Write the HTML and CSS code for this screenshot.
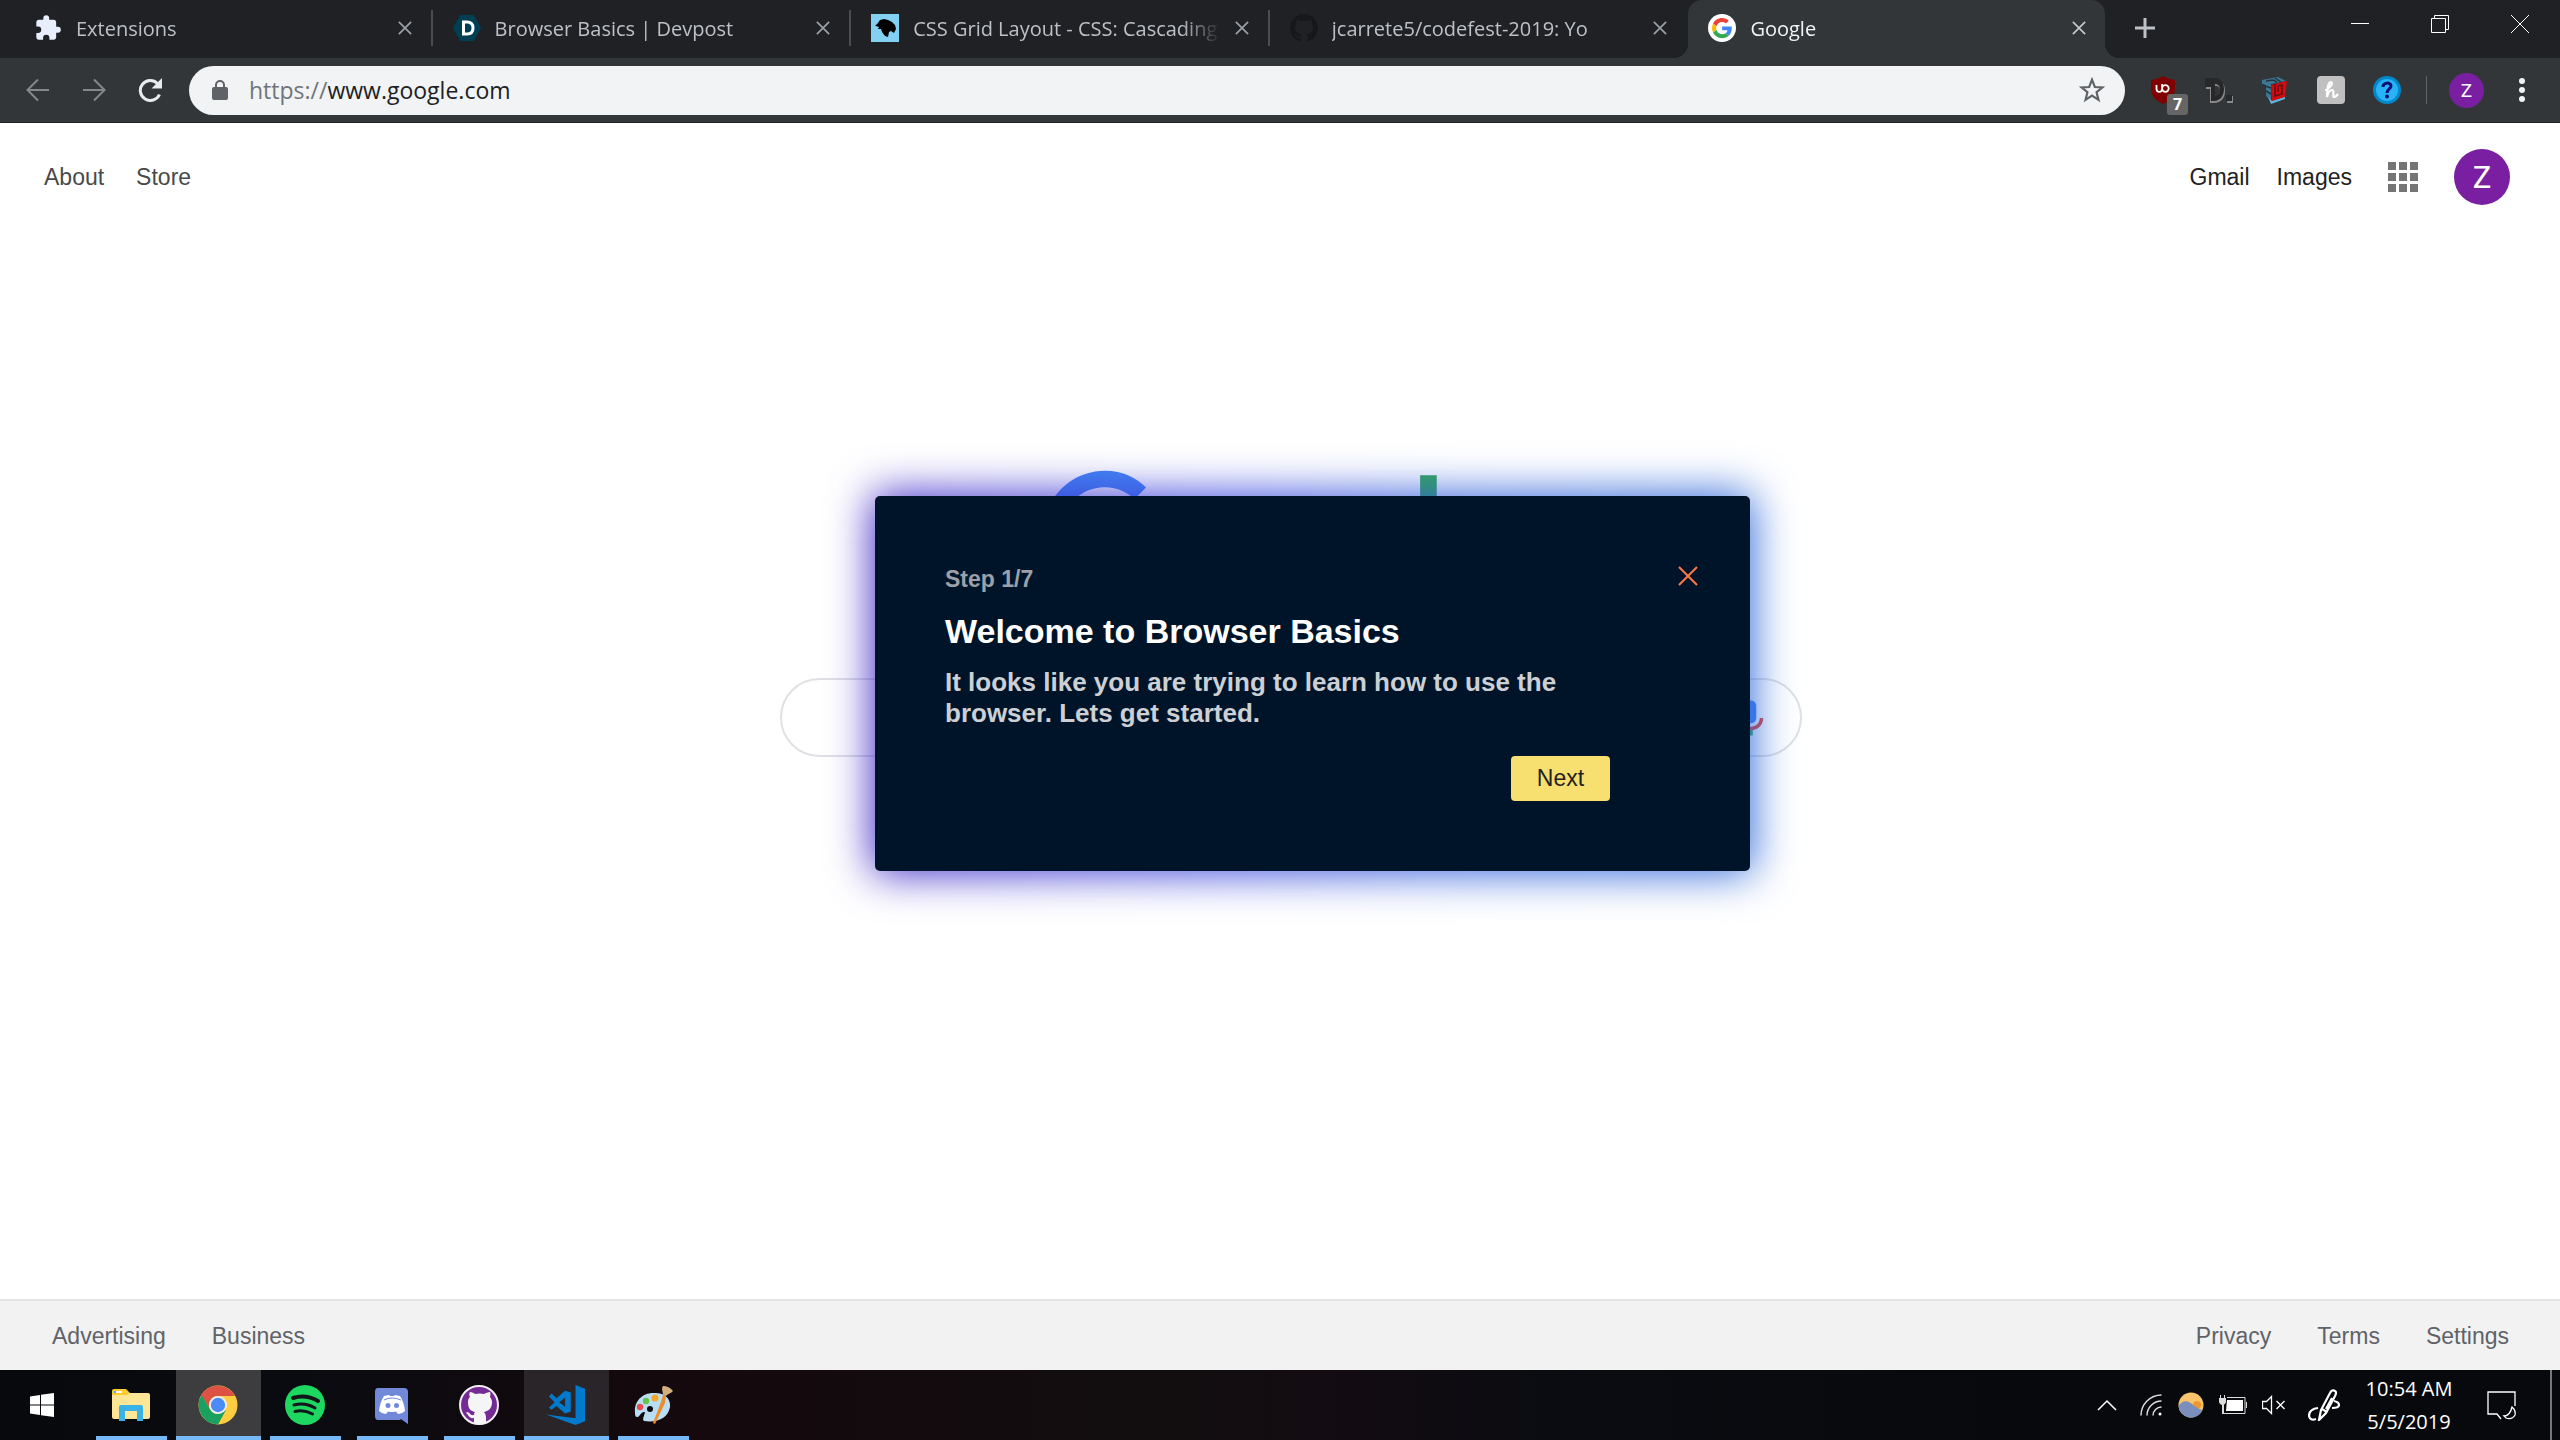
FILE: index.html
```html
<!DOCTYPE html>
<html lang="en">
<head>
  <meta charset="UTF-8" />
  <meta name="viewport" content="width=device-width, initial-scale=1.0" />
  <title>Google</title>
  <link rel="stylesheet" href="styles.css">
</head>
<body>
  <svg width="0" height="0" class="defs">
    <defs>
      <symbol id="x" viewBox="0 0 16 16"><path d="M1 1l14 14M15 1L1 15" fill="none" stroke="currentColor" stroke-width="2"/></symbol>
      <symbol id="octocat" viewBox="0 0 16 16"><path fill="currentColor" d="M8 0C3.58 0 0 3.58 0 8c0 3.54 2.29 6.53 5.47 7.59.4.07.55-.17.55-.38 0-.19-.01-.82-.01-1.49-2.01.37-2.53-.49-2.69-.94-.09-.23-.48-.94-.82-1.13-.28-.15-.68-.52-.01-.53.63-.01 1.08.58 1.23.82.72 1.21 1.87.87 2.33.66.07-.52.28-.87.51-1.07-1.78-.2-3.64-.89-3.64-3.95 0-.87.31-1.59.82-2.15-.08-.2-.36-1.02.08-2.12 0 0 .67-.21 2.2.82.64-.18 1.32-.27 2-.27s1.36.09 2 .27c1.53-1.04 2.2-.82 2.2-.82.44 1.1.16 1.92.08 2.12.51.56.82 1.27.82 2.15 0 3.07-1.87 3.75-3.65 3.95.29.25.54.73.54 1.48 0 1.07-.01 1.93-.01 2.2 0 .21.15.46.55.38A8.01 8.01 0 0 0 16 8c0-4.42-3.58-8-8-8z"/></symbol>
    </defs>
  </svg>

  <header class="browser">
    <div class="tab-strip">
      <div class="tabs">
        <div class="tab">
          <svg class="favicon" viewBox="0 0 24 24"><path fill="#e8eefb" d="M20.500 11H19V7c0-1.100-.9-2-2-2h-4V3.500a2.500 2.500 0 0 0-5 0V5H4c-1.100 0-2 .9-2 2v3.800h1.500a2.700 2.700 0 0 1 0 5.400H2V20c0 1.100.9 2 2 2h3.800v-1.500a2.700 2.700 0 0 1 5.400 0V22H17c1.100 0 2-.9 2-2v-4h1.500a2.500 2.500 0 0 0 0-5z"/></svg>
          <span class="tab-title">Extensions</span>
          <button class="tab-close" aria-label="Close tab"><svg><use href="#x"/></svg></button>
        </div>
        <div class="tab">
          <svg class="favicon" viewBox="0 0 28 28"><path d="M7 1h14l7 13-7 13H7L0 14z" fill="#003e54"/><path d="M10.500 8h3.500c4 0 6 2.500 6 6s-2 6-6 6h-3.500z" fill="none" stroke="#fff" stroke-width="3"/></svg>
          <span class="tab-title">Browser Basics | Devpost</span>
          <button class="tab-close" aria-label="Close tab"><svg><use href="#x"/></svg></button>
        </div>
        <div class="tab">
          <svg class="favicon" viewBox="0 0 28 28"><path fill="#83d0f2" d="M0 0h28v28H0z"/><path d="M4 12l3-3 2-3 4-1 4 1 4 2 3 3 1 4-2 4-3-2-2 1-1 5-3-1-3-4-1-3-3 0 1-2-3-1z"/></svg>
          <span class="tab-title">CSS Grid Layout - CSS: Cascading</span>
          <button class="tab-close" aria-label="Close tab"><svg><use href="#x"/></svg></button>
        </div>
        <div class="tab">
          <svg class="favicon github"><use href="#octocat"/></svg>
          <span class="tab-title">jcarrete5/codefest-2019: Yo</span>
          <button class="tab-close" aria-label="Close tab"><svg><use href="#x"/></svg></button>
        </div>
        <div class="tab active">
          <svg class="favicon" viewBox="0 0 28 28"><circle cx="14" cy="14" r="14" fill="#fff"/><g transform="translate(4 4) scale(.42)"><path fill="#EA4335" d="M24 9.500c3.540 0 6.710 1.220 9.210 3.600l6.850-6.850C35.900 2.380 30.470 0 24 0 14.620 0 6.510 5.380 2.560 13.220l7.980 6.190C12.430 13.720 17.740 9.500 24 9.500z"/><path fill="#4285F4" d="M46.980 24.550c0-1.570-.15-3.090-.38-4.550H24v9.020h12.940c-.58 2.960-2.260 5.480-4.780 7.180l7.730 6c4.510-4.180 7.090-10.360 7.090-17.650z"/><path fill="#FBBC05" d="M10.530 28.590c-.48-1.450-.76-2.990-.76-4.590s.27-3.140.76-4.590l-7.980-6.190C.92 16.460 0 20.120 0 24s.92 7.540 2.560 10.780l7.970-6.190z"/><path fill="#34A853" d="M24 48c6.480 0 11.930-2.130 15.890-5.810l-7.730-6c-2.150 1.450-4.920 2.300-8.160 2.300-6.260 0-11.570-4.220-13.470-9.910l-7.980 6.190C6.510 42.620 14.620 48 24 48z"/></g></svg>
          <span class="tab-title">Google</span>
          <button class="tab-close" aria-label="Close tab"><svg><use href="#x"/></svg></button>
        </div>
      </div>
      <button class="new-tab" aria-label="New tab"><svg viewBox="0 0 20 20"><path d="M10 0v20M0 10h20" stroke="#bdc1c6" stroke-width="3"/></svg></button>
      <div class="window-controls">
        <button aria-label="Minimize"><svg viewBox="0 0 18 18"><path d="M0 8.500h18" stroke="#fff"/></svg></button>
        <button aria-label="Restore"><svg viewBox="0 0 18 18" fill="none" stroke="#fff"><path d="M.5 3.500h14v14H.5zM3.500 3.500v-3h14v14h-3"/></svg></button>
        <button aria-label="Close"><svg viewBox="0 0 18 18"><path d="M0 0l18 18M18 0L0 18" stroke="#fff"/></svg></button>
      </div>
    </div>

    <div class="toolbar">
      <div class="nav-buttons">
        <button aria-label="Back"><svg class="off" viewBox="0 0 24 24"><path d="M23 12H2M12 1.500L1.500 12 12 22.500"/></svg></button>
        <button aria-label="Forward"><svg class="off" viewBox="0 0 24 24"><path d="M1 12h21M12 1.500L22.500 12 12 22.500"/></svg></button>
        <button aria-label="Reload"><svg viewBox="0 0 24 24"><path d="M21.500 16.500A10 10 0 1 1 19.500 5.500" stroke-width="3"/><path d="M24 0v10.500H13.500z" fill="#e8eaed" stroke="none"/></svg></button>
      </div>
      <div class="omnibox">
        <svg class="lock" viewBox="0 0 16 20"><path d="M4 8V5a4 4 0 0 1 8 0v3" fill="none" stroke="#5f6368" stroke-width="2"/><rect y="7" width="16" height="13" rx="2" fill="#5f6368"/></svg>
        <a class="url" href="#"><span>https://</span>www.google.com</a>
        <button aria-label="Bookmark this page"><svg class="star" viewBox="0 0 24 24"><path d="M12 2.500l2.600 6.700 7.100.4-5.500 4.500 1.800 7-6-3.900-6 3.900 1.800-7-5.500-4.500 7.100-.4z" fill="none" stroke="#5f6368" stroke-width="2"/></svg></button>
      </div>
      <div class="extensions">
        <button class="ublock" aria-label="uBlock Origin">
          <svg viewBox="0 0 28 28"><path d="M14 0c4 2.500 8 3.500 12 4v8c0 8-5 13-12 16C7 25 2 20 2 12V4c4-.5 8-1.500 12-4z" fill="#800000"/><path d="M7.500 9v4q0 2.800 2.800 2.800t2.800-2.800V8m0 4.500a3.300 3.300 0 1 0 6.600 0 3.300 3.300 0 1 0-6.600 0" fill="none" stroke="#fff" stroke-width="1.800"/></svg>
          <span class="badge">7</span>
        </button>
        <button aria-label="D"><svg viewBox="0 0 28 28"><path fill="#8a8a8a" fill-rule="evenodd" d="M1 4h9c7 0 10 4 10 11s-4 12-11 12H5V13H1zM10 10v12c4 0 5-3 5-7s-1-5-5-5zM22 20h6v7h-6z"/><path fill="#26282a" fill-rule="evenodd" d="M0 2h9c7 0 10 4 10 11s-4 12-10 12H6V11H0zM10 8v12c3 0 5-2 5-6s-2-6-5-6zM21 19h6v6h-6z"/></svg></button>
        <button aria-label="L"><svg viewBox="0 0 28 28"><path d="M1 4L17 1l8 4-15 3v17l-5-5V9L1 8z" fill="#3c7796"/><path d="M5 5l7-1 4 2M1 9l9 3M5 15l5 3M14 2l6 4" stroke="#26343c" stroke-width="1.500" fill="none"/><path d="M10 9l16-4-2 16-13 4z" fill="#d40b0b"/><path d="M14 8v12l7-2V9l-4 1v6" fill="none" stroke="#5b1118" stroke-width="1.500"/><path d="M7 21l4 4 13-4v2l-14 5z" fill="#61b3e4"/></svg></button>
        <button aria-label="Honey"><svg viewBox="0 0 28 28"><rect width="28" height="28" rx="4" fill="#c0c0c0"/><path d="M8 14c4-1 9-7 6-8-3 0-4 9-4 15 1-4 3-7 5-7 3 0 0 7 2 7s2-1 4-3" fill="none" stroke="#fff" stroke-width="2.200"/></svg></button>
        <button aria-label="Help"><svg viewBox="0 0 28 28"><circle cx="14" cy="14" r="12.500" fill="#27b3f5" stroke="#0387cb" stroke-width="3"/><path d="M10 11c0-5 8-5 8-1 0 3-4 3-4 7" fill="none" stroke="#0a1172" stroke-width="3"/><circle cx="14" cy="20.500" r="2" fill="#0a1172"/></svg></button>
      </div>
      <span class="divider"></span>
      <button class="profile" aria-label="Profile">Z</button>
      <button class="menu" aria-label="Menu"><svg viewBox="0 0 6 24" fill="#f1f3f4"><circle cx="3" cy="3" r="3"/><circle cx="3" cy="12" r="3"/><circle cx="3" cy="21" r="3"/></svg></button>
    </div>
  </header>

  <main class="page">
    <nav class="top-nav">
      <div class="links">
        <a href="#">About</a>
        <a href="#">Store</a>
      </div>
      <div class="links account">
        <a class="dark" href="#">Gmail</a>
        <a class="dark" href="#">Images</a>
        <button class="apps" aria-label="Google apps"><svg viewBox="0 0 30 30" fill="#757575"><path d="M0 0h8v8H0zM11 0h8v8h-8zM22 0h8v8h-8zM0 11h8v8H0zM11 11h8v8h-8zM22 11h8v8h-8zM0 22h8v8H0zM11 22h8v8h-8zM22 22h8v8h-8z"/></svg></button>
        <button class="avatar" aria-label="Account">Z</button>
      </div>
    </nav>

    <div class="search">
      <svg class="logo" viewBox="0 0 272 92">
        <path fill="#EA4335" d="M115.750 47.180c0 12.770-9.990 22.180-22.250 22.180s-22.250-9.410-22.250-22.180C71.250 34.320 81.240 25 93.500 25s22.250 9.320 22.250 22.180zm-9.740 0c0-7.980-5.790-13.440-12.510-13.440S80.990 39.200 80.990 47.180c0 7.900 5.790 13.440 12.510 13.440s12.510-5.550 12.510-13.440z"/>
        <path fill="#FBBC05" d="M163.750 47.180c0 12.770-9.990 22.180-22.250 22.180s-22.250-9.410-22.250-22.180c0-12.850 9.990-22.180 22.250-22.180s22.250 9.320 22.250 22.180zm-9.740 0c0-7.980-5.790-13.440-12.510-13.440s-12.510 5.460-12.510 13.440c0 7.900 5.790 13.440 12.510 13.440s12.510-5.550 12.510-13.440z"/>
        <path fill="#4285F4" d="M209.750 26.340v39.820c0 16.380-9.660 23.070-21.080 23.070-10.750 0-17.220-7.190-19.660-13.070l8.480-3.530c1.510 3.610 5.210 7.870 11.170 7.870 7.310 0 11.840-4.510 11.840-13v-3.190h-.34c-2.180 2.690-6.380 5.040-11.680 5.040-11.090 0-21.250-9.660-21.250-22.090 0-12.520 10.160-22.260 21.250-22.260 5.290 0 9.490 2.350 11.680 4.960h.34v-3.610h9.250z"/>
        <path fill="#34A853" d="M225 3v65h-9.500V3h9.500z"/>
        <path fill="#EA4335" d="M262.020 54.480l7.560 5.040c-2.440 3.610-8.320 9.830-18.480 9.830-12.600 0-22.010-9.740-22.010-22.180 0-13.190 9.490-22.180 20.920-22.180 11.510 0 17.140 9.160 18.980 14.110l1.010 2.520-29.650 12.280c2.270 4.450 5.800 6.720 10.750 6.720 4.960 0 8.400-2.440 10.920-6.140z"/>
        <path fill="#4285F4" d="M35.290 41.410V32H67c.31 1.640.47 3.580.47 5.680 0 7.060-1.930 15.790-8.150 22.010-6.050 6.300-13.780 9.660-24.020 9.660C16.320 69.350.36 53.890.36 34.910.36 15.930 16.320.47 35.300.47c10.500 0 17.980 4.120 23.600 9.490l-6.640 6.640c-4.030-3.780-9.490-6.720-16.970-6.720-13.860 0-24.700 11.170-24.700 25.030 0 13.860 10.840 25.030 24.700 25.030 8.990 0 14.110-3.610 17.390-6.890 2.660-2.660 4.410-6.460 5.100-11.650l-22.490.01z"/>
      </svg>
      <form class="search-box">
        <input type="text" aria-label="Search">
        <button type="button" aria-label="Search by voice">
          <svg viewBox="0 0 24 24"><path fill="#4285f4" d="M12 15c1.660 0 3-1.310 3-2.970V5.010C15 3.350 13.660 2 12 2S9 3.340 9 5.010v7.020C9 13.690 10.340 15 12 15z"/><path fill="#34a853" d="M11 18.080h2v3.920h-2z"/><path fill="#fbbc05" d="M7.050 16.870C5.780 15.590 5 13.920 5 12h2c0 1.450.56 2.420 1.470 3.380v.32l-1.150 1.180z"/><path fill="#ea4335" d="M12 16.930c-1.390 0-2.640-.55-3.530-1.550l-1.410 1.490C8.320 18.160 10.070 19 12 19c3.870 0 6.990-2.920 6.990-7H17c0 2.920-2.240 4.930-5 4.930z"/></svg>
        </button>
      </form>
    </div>

    <div class="overlay">
      <div class="modal">
        <div class="modal-content">
          <div class="modal-top">
            <h3>Step 1/7</h3>
            <button class="close-btn" aria-label="Close"><svg viewBox="0 0 20 20"><path d="M1 1l18 18M19 1L1 19" stroke="#ff7a45" stroke-width="2"/></svg></button>
          </div>
          <h1>Welcome to Browser Basics</h1>
          <p>It looks like you are trying to learn how to use the browser. Lets get started.</p>
          <button class="next-btn">Next</button>
        </div>
      </div>
    </div>
  </main>

  <footer class="page-footer">
    <div class="links">
      <a href="#">Advertising</a>
      <a href="#">Business</a>
    </div>
    <div class="links">
      <a href="#">Privacy</a>
      <a href="#">Terms</a>
      <a href="#">Settings</a>
    </div>
  </footer>

  <div class="taskbar">
    <div class="apps-list">
      <button class="start" aria-label="Start"><svg viewBox="0 0 24 24" fill="#fff"><path d="M0 3.500l10-1.500v9.500H0zM11 1.800L24 0v11.500H11zM0 12.500h10V22L0 20.500zM11 12.500h13V24l-13-1.800z"/></svg></button>
      <button class="app" aria-label="File Explorer"><svg viewBox="0 0 40 40"><rect x="1" y="8" width="38" height="26" rx="2" fill="#ffe694"/><path d="M1 10V6q0-2 2-2h12l4 4-3 2z" fill="#fccb30"/><path d="M3 6h8v2H3z" fill="#fff"/><path d="M3 6h2v2H3z" fill="#38b3e8"/><path d="M8 36V22q0-2 2-2h20q2 0 2 2v14h-6V26H14v10z" fill="#38b3e8"/></svg></button>
      <button class="app current" aria-label="Chrome"><svg viewBox="0 0 40 40"><circle cx="20" cy="20" r="19.500" fill="#ffcd40"/><path d="M3.100 10.300A19.500 19.500 0 0 1 37 11H20a9 9 0 0 0-7.800 13.500z" fill="#de5246"/><path d="M3.500 10A19.500 19.500 0 0 0 20 39.500l8-14.500-8 4a9 9 0 0 1-7.800-4.500z" fill="#1aa15f"/><circle cx="20" cy="20" r="9" fill="#f1f1f1"/><circle cx="20" cy="20" r="7.200" fill="#4c8bf5"/></svg></button>
      <button class="app" aria-label="Spotify"><svg viewBox="0 0 40 40"><circle cx="20" cy="20" r="20" fill="#1ed760"/><g fill="none" stroke="#11151a" stroke-linecap="round"><path d="M8 13q13-4 25 3" stroke-width="4"/><path d="M9 20q11-3 21 3" stroke-width="3"/><path d="M10 26.500q9-2.500 17.500 2.500" stroke-width="3"/></g></svg></button>
      <button class="app" aria-label="Discord"><svg viewBox="0 0 40 40"><path d="M6 3h26q4 0 4 4v32l-8-4H6q-3 0-3-4V7q0-4 3-4z" fill="#7289da"/><path d="M3 35h25l2-2 6 6H3z" fill="#0c0a0e"/><path d="M26 32l10 7v-8z" fill="#7289da"/><path d="M12 11l5-1 1 1h4l1-1 5 1q4 6 5 15-3 3-7 3l-2-2.500q-4 1-8 0L14 29q-4 0-7-3 1-9 5-15z" fill="#fff"/><circle cx="16" cy="20.500" r="2.500" fill="#7289da"/><circle cx="24.500" cy="20.500" r="2.500" fill="#7289da"/><path d="M12 15q8-4 17 0" fill="none" stroke="#7289da"/></svg></button>
      <button class="app" aria-label="GitHub Desktop"><svg viewBox="0 0 40 40"><circle cx="20" cy="20" r="19" fill="#742b95" stroke="#f4eef7" stroke-width="2"/><path d="M9 17c0-3 1-4 2-5-1-2-1-4 0-5 2 0 4 1 5 2q5-1 9 0c2-1 4-2 6-2 1 2 0 4 0 5 1 1 2 3 2 5 0 6-3 9-8 10q2 2 2 5v6q-6 3-12 0v-5c-5 1-5-3-8-5l1-1c3 0 3 4 7 3q0-2 1-3c-5-1-7-4-7-10z" fill="#f5f5f5"/></svg></button>
      <button class="app current soft" aria-label="Visual Studio Code"><svg viewBox="0 0 42 42" fill="#007acc"><path d="M31 0l10 4v34l-10 4L0 31l31 4z"/><path fill-rule="evenodd" d="M20 6l6 2v20l-6 2-9-8-5 4-3-2 6-6-6-6 3-3 5 5zm0 7l-6 5 6 5z"/></svg></button>
      <button class="app" aria-label="Paint"><svg viewBox="0 0 40 40"><path d="M2 27C1 16 10 7 22 8c10 0 16 6 15 14-2 11-12 16-26 14-2-2 0-4 1-9-4-1-5 5-8 5-2 0-2-3-2-5z" fill="#b9def3"/><circle cx="17" cy="24" r="3" fill="#0e0a10"/><circle cx="7" cy="22" r="3.200" fill="#e84c4c"/><circle cx="13" cy="16" r="3.200" fill="#65c34a"/><circle cx="22" cy="13" r="3.500" fill="#f6a623"/><path d="M30 10c0-4-2-6 0-9q6 0 10 5c-3 3-4 2-7 5z" fill="#d4ad7d"/><path d="M30 10l3 1-1 7-10 21-2-1 8-21z" fill="#ee8d27"/></svg></button>
    </div>
    <div class="tray">
      <svg class="chevron" viewBox="0 0 20 12"><path d="M1 11l9-9 9 9" fill="none" stroke="#fff" stroke-width="1.500"/></svg>
      <svg class="wifi" viewBox="0 0 22 22" fill="none" stroke="#ddd"><path d="M1 21.500A20.500 20.500 0 0 1 21.500 1M7 21.500A14.500 14.500 0 0 1 21.500 7M13 21.500a8.500 8.500 0 0 1 8.500-8.500" stroke-width="1.500"/><circle cx="20" cy="20" r="1.500" fill="#fff" stroke="none"/></svg>
      <svg class="weather" viewBox="0 0 26 26"><circle cx="13" cy="13" r="12.500" fill="#f7c46c"/><circle cx="19" cy="13" r="4" fill="#f0982f"/><path d="M.5 14c3-5 8-6 12-3s8 6 12 7A12.500 12.500 0 0 1 .5 14z" fill="#7b8fbd"/></svg>
      <svg class="battery" viewBox="0 0 28 20"><path d="M8 2.500h18v16H5" fill="none" stroke="#ddd"/><path d="M8 5h16v11H7z" fill="#fff"/><path d="M27 7h1v6h-1zM0 3h7v4q-1 3-3.500 3T0 7zM1 0h1v3H1zM5 0h1v3H5zM3 9h2v10H3z" fill="#ddd"/></svg>
      <svg class="speaker" viewBox="0 0 24 20" fill="none" stroke="#fff"><path d="M.5 6.500h4l5-5v17l-5-5h-4zM14.500 6l8 8M22.500 6l-8 8" stroke-width="1.300"/></svg>
      <svg class="pen" viewBox="0 0 32 32" fill="none" stroke="#fff" stroke-width="2.200"><path d="M11 31l2-10L22 4q2-4 5-2 2 1 0 5L18 24zM14 20l5 3M24 9l-6 11"/><path d="M10 19q-9 1-9 8 1 5 7 3M26 12q5 1 5 4 0 3-7 3"/></svg>
      <div class="clock"><span>10:54 AM</span><span>5/5/2019</span></div>
      <svg class="action" viewBox="0 0 29 29" fill="none" stroke="#fff" stroke-width="1.300"><path d="M14 28l-4-5H1V1h27v14"/><path d="M25 16q4 3 3 8-3 5-9 3l-2-2q6 0 8-9z"/></svg>
      <span class="show-desktop"></span>
    </div>
  </div>
</body>
</html>
```

FILE: styles.css
```css
* {
  box-sizing: border-box;
}
body {
  margin: 0;
  font-family: "Liberation Sans", Arial, sans-serif;
  font-size: 23px;
  display: flex;
  flex-direction: column;
  min-height: 100vh;
  background-color: #fff;
}
button {
  border: 0;
  padding: 0;
  background: none;
  font: inherit;
  color: inherit;
  cursor: pointer;
}
svg {
  display: block;
}
a {
  color: inherit;
  text-decoration: none;
}
.defs {
  position: absolute;
}

/* browser */
.browser {
  font-family: "Open Sans", "Noto Sans", sans-serif;
  background-color: #323639;
  border-bottom: 1px solid #202124;
}
.tab-strip {
  display: flex;
  align-items: flex-start;
  height: 58px;
  background-color: #202124;
}
.tabs {
  display: flex;
  align-items: flex-start;
  flex: 0 1 2105px;
  min-width: 0;
  padding-left: 14px;
}
.tab {
  flex: 1;
  min-width: 0;
  display: flex;
  align-items: center;
  gap: 14px;
  height: 36px;
  margin-top: 10px;
  padding: 0 19px 0 20px;
  border-right: 2px solid #4a4c50;
  color: #bdc1c6;
  font-size: 20px;
}
.tab:nth-child(4) {
  border-color: transparent;
}
.tab.active {
  position: relative;
  height: 58px;
  margin-top: 0;
  padding-bottom: 2px;
  border: 0;
  border-radius: 14px 14px 0 0;
  background-color: #323639;
  color: #f1f3f4;
}
/* curved feet of the active tab */
.tab.active::before, .tab.active::after {
  content: "";
  position: absolute;
  bottom: 0;
  width: 14px;
  height: 14px;
}
.tab.active::before {
  right: 100%;
  background: radial-gradient(circle at 0 0, transparent 14px, #323639 14px);
}
.tab.active::after {
  left: 100%;
  background: radial-gradient(circle at 100% 0, transparent 14px, #323639 14px);
}
.favicon {
  flex: none;
  width: 28px;
  height: 28px;
}
.favicon.github {
  color: #15171a;
}
.tab-title {
  flex: 1;
  overflow: hidden;
  white-space: nowrap;
  -webkit-mask-image: linear-gradient(to left, transparent, #000 40px);
  mask-image: linear-gradient(to left, transparent, #000 40px);
}
.tab-close {
  color: #9aa0a6;
}
.tab-close svg {
  width: 14px;
  height: 14px;
}
.active .tab-close {
  color: #c4c7ca;
}
.new-tab {
  margin: 18px 0 0 30px;
}
.new-tab svg {
  width: 20px;
  height: 20px;
}
.window-controls {
  display: flex;
  margin-left: auto;
  height: 48px;
}
.window-controls button {
  width: 80px;
  display: flex;
  align-items: center;
  justify-content: center;
}
.window-controls svg {
  width: 18px;
  height: 18px;
}
.toolbar {
  display: flex;
  align-items: center;
  height: 64px;
  padding: 0 35px 0 26px;
}
.nav-buttons {
  display: flex;
  gap: 32px;
}
.nav-buttons svg {
  width: 24px;
  height: 24px;
  fill: none;
  stroke: #e8eaed;
  stroke-width: 2;
}
.nav-buttons .off {
  stroke: #85888b;
}
.omnibox {
  flex: 1;
  display: flex;
  align-items: center;
  height: 49px;
  margin-left: 27px;
  padding: 0 20px 0 23px;
  border-radius: 25px;
  background-color: #f1f3f4;
}
.lock {
  width: 16px;
  height: 20px;
}
.url {
  flex: 1;
  margin-left: 21px;
  color: #202124;
  font-size: 23px;
}
.url span {
  color: #70757a;
}
.star {
  width: 26px;
  height: 26px;
}
.extensions {
  display: flex;
  gap: 28px;
  margin-left: 24px;
}
.extensions svg {
  width: 28px;
  height: 28px;
}
.ublock {
  position: relative;
}
.badge {
  position: absolute;
  right: -11px;
  bottom: -11px;
  width: 21px;
  height: 21px;
  border-radius: 3px;
  background-color: #666;
  color: #fff;
  font-size: 16px;
  font-weight: bold;
  line-height: 21px;
  text-align: center;
}
.divider {
  width: 1px;
  height: 28px;
  margin: 0 22px 0 25px;
  background-color: #5f6368;
}
.profile {
  width: 35px;
  height: 35px;
  border-radius: 50%;
  background-color: #7b1fa2;
  color: #fff;
  font-family: Roboto, sans-serif;
  font-size: 19px;
}
.menu {
  margin-left: 35px;
}
.menu svg {
  width: 6px;
  height: 24px;
}

/* page */
.page {
  flex: 1;
  position: relative;
}
.links {
  display: flex;
  align-items: center;
}
.top-nav {
  display: flex;
  justify-content: space-between;
  padding: 26px 50px 0 44px;
  color: #4a4a4a;
}
.top-nav .links {
  gap: 32px;
}
.top-nav .account {
  gap: 27px;
}
.dark {
  color: #222;
}
.apps {
  margin: 0 9px;
}
.apps svg {
  width: 30px;
  height: 30px;
}
.avatar {
  width: 56px;
  height: 56px;
  border-radius: 50%;
  background-color: #7b1fa2;
  color: #fff;
  font-family: Roboto, sans-serif;
  font-size: 31px;
}
.search {
  display: flex;
  flex-direction: column;
  align-items: center;
  gap: 47px;
  padding-top: 265px;
}
.logo {
  width: 476px;
  height: 161px;
  margin-left: 2px;
}
.search-box {
  display: flex;
  align-items: center;
  width: 1022px;
  height: 79px;
  margin-left: 22px;
  padding: 0 28px;
  border: 2px solid #dfe1e5;
  border-radius: 40px;
}
.search-box input {
  flex: 1;
  border: 0;
  outline: 0;
  background: none;
  font-size: 28px;
}
.search-box svg {
  width: 42px;
  height: 42px;
}
.overlay {
  position: absolute;
  inset: 0;
  display: flex;
  justify-content: center;
  align-items: flex-start;
  padding: 373px 0 0 65px;
}
.modal {
  position: relative;
  width: 875px;
}
/* coloured glow behind the card */
.modal::before {
  content: "";
  position: absolute;
  inset: -2px;
  background: linear-gradient(to right, #3c24c4, #3a46dc 40%, #2f62dc 70%, #2a66d8);
  filter: blur(22px);
}
.modal-content {
  position: relative;
  padding: 70px;
  border-radius: 5px;
  background-color: #001429;
  color: #fff;
}
.modal-top {
  display: flex;
  align-items: flex-start;
  justify-content: space-between;
  margin-right: -18px;
}
.modal h1, .modal h3, .modal p {
  margin: 0;
}
.modal h3 {
  color: #9ba1aa;
  font-size: 23px;
  line-height: 27px;
}
.close-btn svg {
  width: 20px;
  height: 20px;
}
.modal h1 {
  margin-top: 18px;
  font-size: 34px;
  line-height: 40px;
}
.modal p {
  width: 665px;
  margin-top: 16px;
  color: #ccd0d4;
  font-size: 26px;
  font-weight: bold;
  line-height: 31px;
}
.next-btn {
  display: block;
  width: 99px;
  height: 45px;
  margin: 27px 70px 0 auto;
  border-radius: 4px;
  background-color: #f7df70;
  color: #222;
}
.page-footer {
  display: flex;
  justify-content: space-between;
  height: 71px;
  padding: 2px 51px 0 52px;
  border-top: 2px solid #e4e4e4;
  background-color: #f2f2f2;
  color: #5f6368;
}
.page-footer .links {
  gap: 46px;
}

/* taskbar */
.taskbar {
  display: flex;
  justify-content: space-between;
  height: 70px;
  background: linear-gradient(to right, #07090c, #0a0b10 12%, #15090d 27%, #120e0f 45%, #130c12 52%, #0b0c11 60%, #07090c 80%);
}
.apps-list {
  display: flex;
  gap: 2px;
}
.start {
  width: 87px;
  padding-left: 30px;
}
.start svg {
  width: 24px;
  height: 24px;
}
.app {
  width: 85px;
  display: flex;
  flex-direction: column;
  align-items: center;
}
.app svg {
  width: 40px;
  height: 40px;
  margin: 15px 1px 11px 0;
}
.app::after {
  content: "";
  width: 71px;
  height: 4px;
  background-color: #76b9f8;
}
.app.current {
  background-color: #3d3d3f;
}
.app.soft {
  background-color: #2a2528;
}
.app.current::after {
  width: 85px;
}
.tray {
  display: flex;
  align-items: center;
  color: #fff;
}
.chevron {
  width: 20px;
  height: 12px;
}
.wifi {
  width: 22px;
  height: 22px;
  margin-left: 23px;
}
.weather {
  width: 26px;
  height: 26px;
  margin-left: 16px;
}
.battery {
  width: 28px;
  height: 20px;
  margin-left: 15px;
}
.speaker {
  width: 24px;
  height: 20px;
  margin-left: 15px;
}
.pen {
  width: 32px;
  height: 32px;
  margin-left: 22px;
}
.clock {
  display: flex;
  flex-direction: column;
  align-items: center;
  width: 138px;
  font-family: "Open Sans", "Noto Sans", sans-serif;
  font-size: 20px;
  line-height: 33px;
}
.action {
  width: 29px;
  height: 29px;
  margin-left: 9px;
}
.show-desktop {
  width: 10px;
  height: 70px;
  margin-left: 34px;
  border-left: 2px solid #77787a;
}
```
